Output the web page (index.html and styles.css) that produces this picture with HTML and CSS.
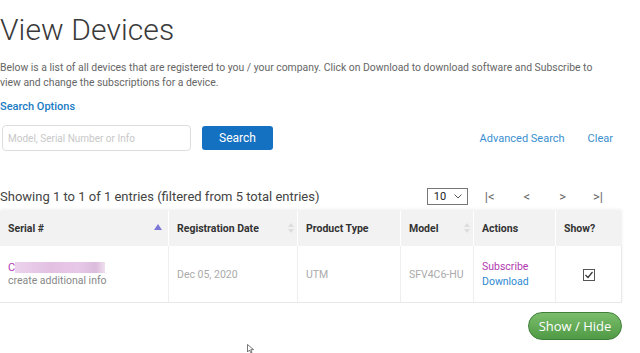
FILE: index.html
```html
<!DOCTYPE html>
<html lang="en">
<head>
  <meta charset="UTF-8" />
  <meta name="viewport" content="width=device-width, initial-scale=1" />
  <title>View Devices</title>
  <link rel="stylesheet" href="styles.css">
</head>
<body>
  <main class="page">
    <h1>View Devices</h1>
    <p class="intro">Below is a list of all devices that are registered to you / your company. Click on Download to download software and Subscribe to view and change the subscriptions for a device.</p>
    <div class="search-title">Search Options</div>

    <div class="search-bar">
      <input class="search-input" type="text" placeholder="Model, Serial Number or Info">
      <button class="search-btn">Search</button>
      <div class="search-links">
        <a href="#">Advanced Search</a>
        <a href="#">Clear</a>
      </div>
    </div>

    <div class="table-tools">
      <div class="entries">Showing 1 to 1 of 1 entries (filtered from 5 total entries)</div>
      <div class="pager">
        <div class="page-size">10
          <svg class="chev" width="8" height="5" viewBox="0 0 8 5"><path d="M0.5 0.5 L4 4 L7.5 0.5" fill="none" stroke="#555" stroke-width="1"/></svg>
        </div>
        <span class="pg pg-first">|&lt;</span>
        <span class="pg pg-prev">&lt;</span>
        <span class="pg pg-next">&gt;</span>
        <span class="pg pg-last">&gt;|</span>
      </div>
    </div>

    <table class="devices">
      <thead>
        <tr>
          <th class="col-serial">Serial # <span class="sort sort-up"></span></th>
          <th class="col-date">Registration Date <span class="sort sort-both"></span></th>
          <th class="col-type">Product Type</th>
          <th class="col-model">Model <span class="sort sort-both"></span></th>
          <th class="col-actions">Actions</th>
          <th class="col-show">Show?</th>
        </tr>
      </thead>
      <tbody>
        <tr>
          <td>
            <div class="serial"><span class="serial-c">C</span><span class="blur"></span></div>
            <div class="info">create additional info</div>
          </td>
          <td class="muted">Dec 05, 2020</td>
          <td class="muted">UTM</td>
          <td class="muted">SFV4C6-HU</td>
          <td>
            <a class="subscribe" href="#">Subscribe</a>
            <a class="download" href="#">Download</a>
          </td>
          <td class="center"><span class="checkbox">
            <svg width="12" height="12" viewBox="0 0 12 12"><rect x="0.5" y="0.5" width="11" height="11" fill="#fff" stroke="#555"/><path d="M2.5 6 L5 8.5 L9.5 3" fill="none" stroke="#333" stroke-width="1.2"/></svg>
          </span></td>
        </tr>
      </tbody>
    </table>

    <div class="footer-bar">
      <button class="toggle-btn">Show / Hide</button>
    </div>
    <svg class="cursor" width="10" height="10" viewBox="0 0 10 10"><path d="M0.5 0.5 L0.5 8 L2.5 6 L4 9 L5 8.5 L3.8 5.6 L6.5 5.6 Z" fill="#fff" stroke="#555" stroke-width="0.8"/></svg>
  </main>
</body>
</html>
```

FILE: styles.css
```css
body {
  font-family: Roboto, 'Liberation Sans', sans-serif;
  background: #fff;
  color: #333;
  margin: 0; padding: 0;
}
.page {
  width: 622px;
  position: relative;
  height: 353px;
}
h1 {
  font-weight: 300;
  font-size: 30px;
  color: #3a3a3a;
  margin: 0;
  padding-top: 10px;
  line-height: 40px;
  letter-spacing: 0.1px;
}
.intro {
  font-size: 10.4px;
  color: #666;
  line-height: 15px;
  margin: 10px 0 0;
  width: 602px;
}
.search-title {
  color: #1a7bc4;
  font-weight: 500;
  font-size: 11px;
  margin-top: 10px;
}
.search-bar {
  display: flex;
  align-items: center;
  margin-top: 12px;
  padding-left: 2px;
}
.search-input {
  width: 189px;
  height: 26px;
  box-sizing: border-box;
  border: 1px solid #ddd;
  border-radius: 4px;
  padding: 0 5px;
  font-family: inherit;
  font-size: 10px;
  color: #333;
}
.search-input::placeholder {
  color: #c8c8c8;
}
.search-btn {
  margin-left: 11px;
  width: 71px;
  height: 24px;
  background: #1470c0;
  color: white;
  border: none;
  border-radius: 3px;
  font-family: inherit;
  font-size: 12px;
}
.search-links {
  margin-left: auto;
  display: flex;
  gap: 23px;
  margin-right: 9px;
}
.search-links a {
  color: #3a8fd0;
  text-decoration: none;
  font-size: 11px;
}
.table-tools {
  display: flex;
  align-items: center;
  justify-content: space-between;
  margin-top: 36px;
  height: 19px;
}
.entries {
  font-size: 13px;
  color: #444;
}
.pager {
  display: flex;
  align-items: center;
  margin-right: 19px;
}
.page-size {
  width: 41px;
  height: 17px;
  box-sizing: border-box;
  border: 1px solid #777;
  font-size: 11px;
  padding-left: 6px;
  line-height: 15px;
  color: #222;
  position: relative;
}
.chev {
  position: absolute;
  right: 5px;
  top: 5px;
}
.pg {
  font-size: 13px;
  color: #666;
}
.pg-first { margin-left: 17px; }
.pg-prev { margin-left: 29px; }
.pg-next { margin-left: 29px; }
.pg-last { margin-left: 27px; }
.devices {
  margin-top: 5px;
  width: 622px;
  border-collapse: collapse;
  font-size: 10.5px;
  box-shadow: 0 -2px 3px rgba(0,0,0,0.06);
}
.devices th {
  background: #f2f2f2;
  text-align: left;
  font-weight: 700;
  color: #333;
  height: 35px;
  padding: 0 8px;
  border-left: 1px solid #fff;
  position: relative;
  font-size: 10.5px;
}
.devices th:first-child { border-left: none; }
.devices td {
  height: 56px;
  padding: 0 8px;
  border-left: 1px solid #eee;
  border-bottom: 1px solid #e8e8e8;
  vertical-align: middle;
}
.devices td:first-child { border-left: none; }
.devices td:last-child { border-right: 1px solid #e8e8e8; }
.col-serial { width: 152px; }
.col-date { width: 112px; }
.col-type { width: 86px; }
.col-model { width: 56px; }
.col-actions { width: 65px; }
.sort {
  position: absolute;
  right: 6px;
  top: 12px;
  width: 0;
  height: 0;
}
.sort-up {
  border-left: 4px solid transparent;
  border-right: 4px solid transparent;
  border-bottom: 6px solid #7b78d8;
  top: 13px;
}
.sort-both::before, .sort-both::after {
  content: "";
  position: absolute;
  left: -3px;
  border-left: 3px solid transparent;
  border-right: 3px solid transparent;
}
.sort-both::before {
  top: 0;
  border-bottom: 4px solid #ddd;
}
.sort-both::after {
  top: 6px;
  border-top: 4px solid #ddd;
}
.serial {
  display: flex;
  align-items: center;
  height: 12px;
}
.serial-c {
  color: #b03ab0;
  font-size: 11px;
}
.blur {
  display: inline-block;
  width: 90px;
  height: 11px;
  background: linear-gradient(90deg, #ecd3ec, #e2c0e2 40%, #e8c8e8 70%, #dcbcdc 90%, #f0e0f0);
}
.info {
  color: #888;
  font-size: 10.5px;
  margin-top: 1px;
}
.muted {
  color: #aaa;
  font-size: 10.5px;
}
.subscribe, .download {
  display: block;
  text-decoration: none;
  font-size: 10.5px;
  line-height: 15px;
}
.subscribe { color: #b03ab0; }
.download { color: #2d8ad0; }
.center { text-align: center; }
.checkbox svg { display: inline-block; vertical-align: middle; }
.footer-bar {
  display: flex;
  justify-content: flex-end;
  margin-top: 9px;
}
.toggle-btn {
  width: 94px;
  height: 28px;
  border-radius: 14px;
  border: 1px solid #3f7f3a;
  background: linear-gradient(#7bbd6c, #4f9a45);
  color: #fff;
  font-family: 'Open Sans', sans-serif;
  font-size: 13px;
}
.cursor {
  position: absolute;
  left: 247px;
  top: 344px;
}
```
